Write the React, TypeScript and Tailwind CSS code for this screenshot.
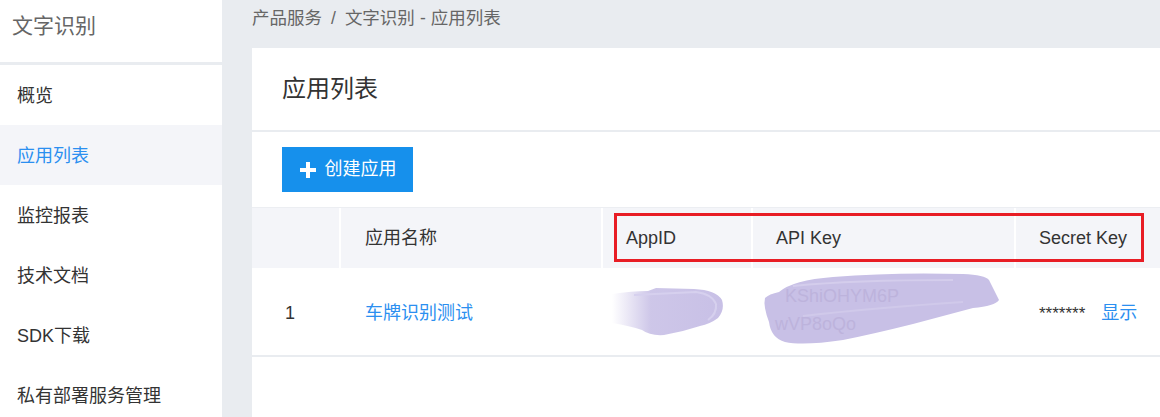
import React from 'react'

const cjk = "font-['Liberation_Sans','Noto_Sans_CJK_SC',sans-serif]"

const menu = ['概览', '应用列表', '监控报表', '技术文档', 'SDK下载', '私有部署服务管理']

function AppIdSmudge() {
  return (
    <svg width="112" height="50" viewBox="0 0 112 50" className="absolute left-[9px] top-[20px]">
      <defs>
        <linearGradient id="fadeL" x1="0" x2="1" y1="0" y2="0">
          <stop offset="0" stopColor="#c8c0e6" stopOpacity="0" />
          <stop offset="0.35" stopColor="#c8c0e6" stopOpacity="0.9" />
          <stop offset="1" stopColor="#c8c0e6" />
        </linearGradient>
      </defs>
      <path d="M0 6 Q20 3 36 3 L44 0 L82 1 Q104 2 110 12 Q113 22 106 30 Q98 36 88 38 Q70 44 52 47 Q38 48 30 42 Q18 38 0 35 Z" fill="url(#fadeL)" />
      <path d="M22 7 L84 4 Q100 6 104 16 Q105 26 96 32" stroke="#d6d0ee" strokeWidth="2" fill="none" />
    </svg>
  )
}

function ApiKeySmudge() {
  return (
    <svg width="238" height="74" viewBox="0 0 238 74" className="absolute left-[10px] top-[4px]">
      <path d="M16 20 Q30 8 70 5 Q130 0 200 2 Q222 3 226 8 L236 28 Q232 34 210 36 Q180 44 150 52 Q110 62 80 68 Q40 74 22 70 Q8 66 6 50 Q0 34 2 26 Q6 22 16 20 Z" fill="#c8c0e6" />
      <path d="M30 14 Q90 8 190 8" stroke="#d4cdec" strokeWidth="2" fill="none" />
      <path d="M40 44 Q110 36 200 30" stroke="#d0c9ea" strokeWidth="2" fill="none" />
      <text x="22" y="30" fontSize="18" fill="#bdb3dc" fontFamily="Liberation Sans, sans-serif">KShiOHYM6P</text>
      <text x="12" y="58" fontSize="18" fill="#bdb3dc" fontFamily="Liberation Sans, sans-serif">wVP8oQo</text>
    </svg>
  )
}

export default function App() {
  return (
    <div className={`flex h-[417px] w-[1160px] overflow-hidden bg-[#e9ecf0] ${cjk}`}>
      <aside className="w-[222px] shrink-0 bg-white">
        <div className="h-[62px] pl-[12px] pt-[11px] text-[21px] leading-[30px] text-[#666]">文字识别</div>
        <div className="h-[3px] bg-[#e9ecf0]" />
        {menu.map((m, i) => (
          <div
            key={m}
            className={
              i === 1
                ? 'flex h-[60px] items-center bg-[#f4f5f9] pl-[17px] pt-[2px] text-[18px] text-[#2b8ff0]'
                : 'flex h-[60px] items-center pl-[17px] pt-[2px] text-[18px] text-[#333]'
            }
          >
            {m}
          </div>
        ))}
      </aside>

      <main className="flex flex-1 flex-col pl-[30px]">
        <div className="flex h-[48px] items-start pt-[7px] text-[17.5px] leading-[22px] text-[#666]">
          <span>产品服务</span>
          <span className="mx-[9px]">/</span>
          <span>文字识别</span>
          <span className="mx-[5px]">-</span>
          <span>应用列表</span>
        </div>

        <div className="flex h-[82px] items-center bg-white pl-[30px] text-[24px] text-[#333]">应用列表</div>

        <div className="mt-[2px] flex-1 bg-white">
          <div className="pl-[30px] pt-[15px]">
            <button className="flex h-[45px] w-[131px] items-center justify-center gap-[8px] bg-[#1690ec] text-[18px] text-white">
              <svg width="18" height="18" viewBox="0 0 18 18">
                <path d="M9 1v16M1 9h16" stroke="white" strokeWidth="4" />
              </svg>
              创建应用
            </button>
          </div>

          <div className="relative mt-[15px] flex h-[61px] border-t border-[#eceef2] bg-[#f4f5f9] text-[18px] text-[#333]">
            <div className="w-[89px] border-r-2 border-white" />
            <div className="flex w-[262px] items-center border-r-2 border-white pl-[24px]">应用名称</div>
            <div className="flex w-[150px] items-center border-r-2 border-white pl-[23px]">AppID</div>
            <div className="flex w-[263px] items-center border-r-2 border-white pl-[23px]">API Key</div>
            <div className="flex flex-1 items-center pl-[23px]">Secret Key</div>
            <div className="absolute left-[362px] top-[5px] h-[49px] w-[530px] border-[3px] border-[#e81d25]" />
          </div>

          <div className="flex h-[89px] border-b-2 border-[#e9ecf0] pt-[4px] text-[18px]">
            <div className="flex w-[89px] items-center pl-[33px] text-[#333]">1</div>
            <div className="flex w-[262px] items-center pl-[24px] text-[#2b8ff0]">车牌识别测试</div>
            <div className="relative -mt-[4px] w-[150px]">
              <AppIdSmudge />
            </div>
            <div className="relative -mt-[4px] w-[263px]">
              <ApiKeySmudge />
            </div>
            <div className="flex flex-1 items-center pl-[23px] text-[#333]">
              <span className="text-[17px]">*******</span>
              <span className="ml-[16px] text-[#2b8ff0]">显示</span>
            </div>
          </div>
        </div>
      </main>
    </div>
  )
}
